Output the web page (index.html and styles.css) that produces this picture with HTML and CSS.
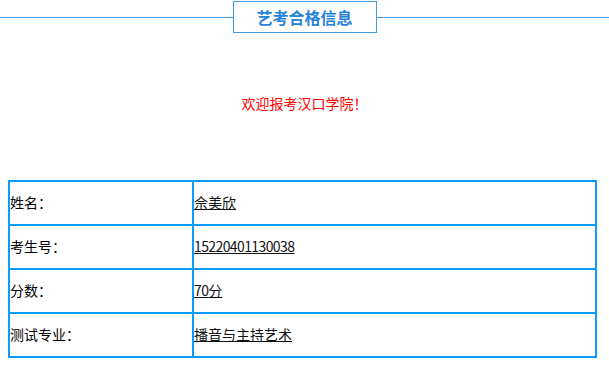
FILE: index.html
```html
<!DOCTYPE html>
<html lang="zh-CN">
<head>
    <meta charset="UTF-8">
    <meta name="viewport" content="width=device-width, initial-scale=1.0">
    <title>艺考合格信息</title>
    <link rel="stylesheet" href="styles.css">
</head>
<body>
    <div class="title-bar">
        <span class="title-line"></span>
        <h1 class="title-box">艺考合格信息</h1>
        <span class="title-line"></span>
    </div>

    <p class="welcome">欢迎报考汉口学院！</p>

    <table class="result">
        <tr>
            <td class="label">姓名：</td>
            <td class="value"><u>佘美欣</u></td>
        </tr>
        <tr>
            <td class="label">考生号：</td>
            <td class="value"><u class="num">15220401130038</u></td>
        </tr>
        <tr>
            <td class="label">分数：</td>
            <td class="value"><u><span class="num">70</span>分</u></td>
        </tr>
        <tr>
            <td class="label">测试专业：</td>
            <td class="value"><u>播音与主持艺术</u></td>
        </tr>
    </table>
</body>
</html>
```

FILE: styles.css
```css
body {
    font-family: "Noto Sans CJK SC", "Liberation Sans", sans-serif;
    font-size: 14px;
    color: #000;
    background: #fff;
    margin: 0;
}
.title-bar {
    display: flex;
    align-items: center;
    padding-top: 1px;
}
.title-line {
    flex: 1;
    border-top: 1px solid #3f9be6;
}
.title-box {
    margin: 0;
    width: 144px;
    height: 32px;
    box-sizing: border-box;
    border: 1px solid #3f9be6;
    font-size: 16px;
    font-weight: bold;
    line-height: 30px;
    text-align: center;
    color: #2683d9;
}
.welcome {
    margin: 60px 0 0;
    line-height: 20px;
    text-align: center;
    color: #ff0000;
}
.result {
    margin: 67px 0 0 8px;
    width: 589px;
    border-collapse: collapse;
}
.result td {
    border: 2px solid #0a9bff;
    padding: 0 0 2px;
    height: 40px;
}
.result .label {
    width: 182px;
}
.result .value u {
    color: #111;
}
.num {
    letter-spacing: -0.6px;
}
```
